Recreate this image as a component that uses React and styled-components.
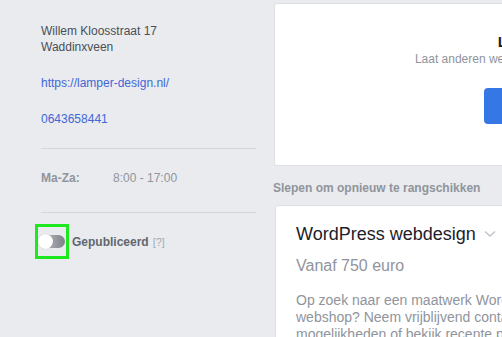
import React from 'react';
import styled, { createGlobalStyle } from 'styled-components';

const Global = createGlobalStyle`
  html, body { margin: 0; padding: 0; }
  body {
    background: #e9ebee;
    font-family: "Liberation Sans", Arial, sans-serif;
    overflow: hidden;
    width: 502px;
    height: 337px;
  }
`;

const Page = styled.div`
  display: flex;
  width: 900px;
  height: 337px;
`;

const Side = styled.aside`
  width: 215px;
  padding: 23px 18px 0 41px;
  flex-shrink: 0;
  color: #4b4f56;
  font-size: 12px;
`;

const Block = styled.div`
  line-height: 16px;
  margin-bottom: ${p => p.gap || 20}px;
`;

const Link = styled.a`
  color: #4267d6;
  text-decoration: none;
  display: block;
  line-height: 16px;
`;

const Divider = styled.hr`
  border: 0;
  border-top: 1px solid #d3d6db;
  margin: 0;
`;

const Hours = styled.div`
  display: flex;
  padding: 21px 0 26px;
  color: #90949c;
  line-height: 16px;
`;

const Day = styled.span`
  width: 72px;
  font-weight: bold;
`;

const PublishRow = styled.div`
  display: flex;
  align-items: center;
  margin: 11px 0 0 -6px;
`;

const ToggleFrame = styled.div`
  width: 28px;
  height: 29px;
  border: 3px solid #1ee81e;
  display: flex;
  align-items: center;
  justify-content: center;
  margin-right: 3px;
`;

const Track = styled.div`
  width: 26px;
  height: 13px;
  border-radius: 7px;
  background: linear-gradient(90deg, #c4c7cc, #7d8086);
  position: relative;
`;

const Knob = styled.div`
  position: absolute;
  left: -1px;
  top: -1px;
  width: 15px;
  height: 15px;
  border-radius: 50%;
  background: #fff;
  box-shadow: 0 0 1px rgba(0,0,0,0.25);
`;

const PubLabel = styled.span`
  font-weight: bold;
  color: #606770;
  font-size: 12px;
`;

const Help = styled.span`
  color: #a7abb2;
  font-size: 11px;
  margin-left: 4px;
`;

const Main = styled.main`
  padding-top: 3px;
  width: 600px;
`;

const Card = styled.section`
  background: #fff;
  border: 1px solid #dddfe2;
  border-radius: 3px;
  box-sizing: border-box;
`;

const Promo = styled(Card)`
  height: 163px;
`;

const PromoInner = styled.div`
  width: ${p => p.w}px;
  display: flex;
  flex-direction: column;
  align-items: center;
  padding-top: 29px;
`;

const PromoTitle = styled.div`
  font-size: 15px;
  font-weight: bold;
  color: #1d2129;
  line-height: 18px;
`;

const PromoText = styled.div`
  font-size: 12px;
  color: #90949c;
  line-height: 16px;
`;

const PromoButton = styled.button`
  margin-top: 21px;
  width: 206px;
  height: 36px;
  border: 0;
  border-radius: 4px;
  background: #3578e5;
`;

const Hint = styled.div`
  margin: 14px 0 0 -1px;
  font-size: 12px;
  font-weight: bold;
  color: #90949c;
  line-height: 16px;
`;

const Service = styled(Card)`
  margin: 9px 0 0 1px;
  padding: 17px 20px;
  height: 200px;
`;

const ServiceHead = styled.div`
  display: flex;
  align-items: center;
  gap: 8px;
  font-size: 18px;
  color: #1d2129;
  line-height: 22px;
`;

const Price = styled.div`
  margin-top: 11px;
  font-size: 16px;
  color: #90949c;
  line-height: 20px;
`;

const Desc = styled.p`
  margin: 16px 0 0;
  font-size: 14px;
  color: #90949c;
  line-height: 17px;
  width: 330px;
`;

export default function App() {
  return (
    <>
      <Global />
      <Page>
        <Side>
          <Block>Willem Kloosstraat 17<br />Waddinxveen</Block>
          <Block><Link href="#">https://lamper-design.nl/</Link></Block>
          <Block gap={21}><Link href="#">0643658441</Link></Block>
          <Divider />
          <Hours><Day>Ma-Za:</Day><span>8:00 - 17:00</span></Hours>
          <Divider />
          <PublishRow>
            <ToggleFrame>
              <Track><Knob /></Track>
            </ToggleFrame>
            <PubLabel>Gepubliceerd</PubLabel>
            <Help>[?]</Help>
          </PublishRow>
        </Side>
        <Main>
          <Promo>
            <PromoInner w={624}>
              <PromoTitle>Laat je diensten hier zien</PromoTitle>
              <PromoText>Laat anderen weten welke diensten je aanbiedt en wat ze kosten</PromoText>
              <PromoButton />
            </PromoInner>
          </Promo>
          <Hint>Slepen om opnieuw te rangschikken</Hint>
          <Service>
            <ServiceHead>
              WordPress webdesign
              <svg width="12" height="8" viewBox="0 0 12 8" fill="none" stroke="#bec3c9" strokeWidth="1.4">
                <path d="M1 1.5 L6 6 L11 1.5" />
              </svg>
            </ServiceHead>
            <Price>Vanaf 750 euro</Price>
            <Desc>Op zoek naar een maatwerk WordPress website of webshop? Neem vrijblijvend contact op voor de mogelijkheden of bekijk recente projecten.</Desc>
          </Service>
        </Main>
      </Page>
    </>
  );
}
